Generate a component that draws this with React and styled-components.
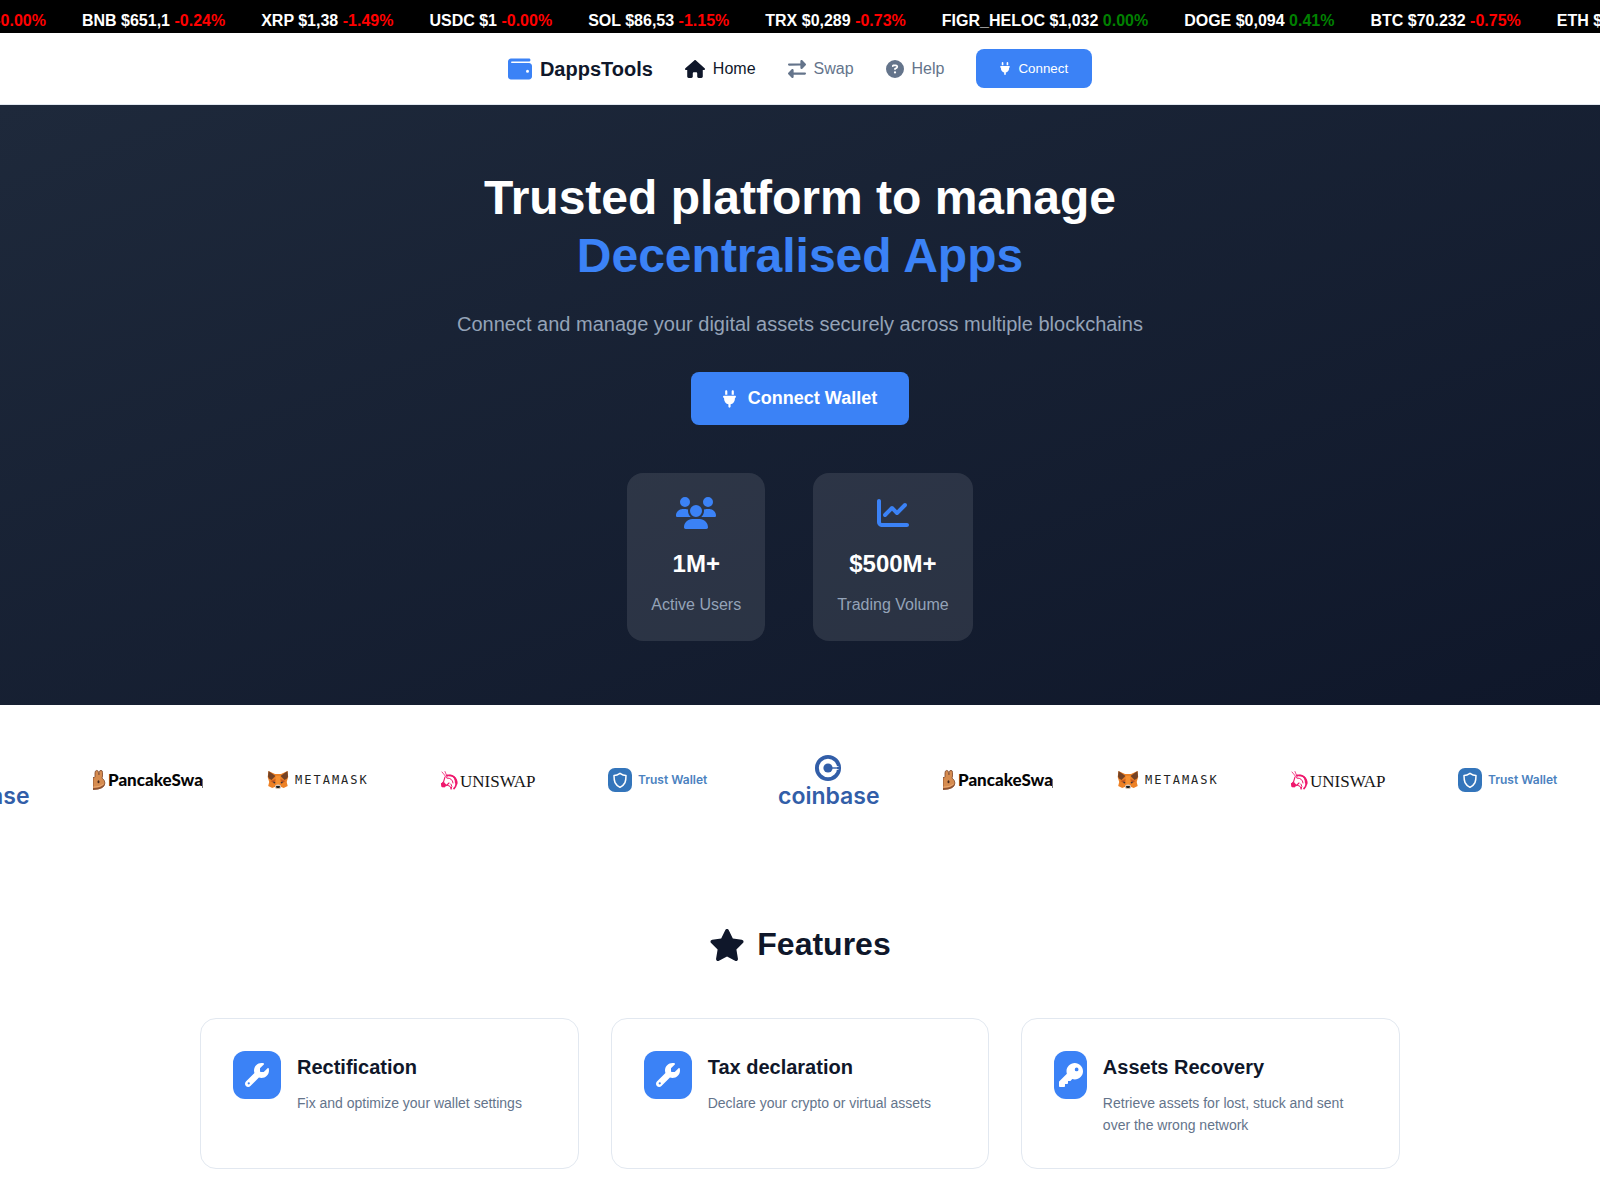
import React from "react";
import styled, { createGlobalStyle } from "styled-components";
import {
  FaWallet, FaHouse, FaRightLeft, FaCircleQuestion, FaPlug,
  FaUsers, FaChartLine, FaStar, FaWrench, FaKey,
} from "react-icons/fa6";

const GlobalStyle = createGlobalStyle`
  * { box-sizing: border-box; margin: 0; padding: 0; }
  body {
    font-family: "Liberation Sans", Arial, sans-serif;
    color: #0f172a;
    background: #ffffff;
    line-height: 1.6;
    overflow: hidden;
  }
`;

const Ticker = styled.div`
  height: 33px;
  padding-top: 5px;
  background: #000000;
  overflow: hidden;
`;

const TickerTrack = styled.ul`
  display: flex;
  gap: 36px;
  margin-left: -75px;
  list-style: none;
  font-size: 16px;
  line-height: 32px;
  font-weight: 700;
  color: #ffffff;
  white-space: nowrap;
`;

const Change = styled.span`
  color: ${(p) => (p.$up ? "#008000" : "#ff0000")};
`;

const Header = styled.header`
  display: flex;
  justify-content: center;
  padding: 16px 0;
  border-bottom: 1px solid #e2e8f0;
`;

const Nav = styled.nav`
  display: flex;
  align-items: center;
  gap: 32px;
`;

const Brand = styled.a`
  display: flex;
  align-items: center;
  gap: 8px;
  font-size: 20px;
  font-weight: 700;
  color: #0f172a;
  text-decoration: none;
  svg { width: 24px; height: 24px; color: #3b82f6; }
`;

const NavLink = styled.a`
  display: flex;
  align-items: center;
  gap: 8px;
  font-size: 16px;
  color: ${(p) => (p.$active ? "#0f172a" : "#64748b")};
  text-decoration: none;
  svg { flex: none; height: 18px; width: ${(p) => (p.$wideIcon ? 20 : 18)}px; }
`;

const Button = styled.button`
  display: inline-flex;
  align-items: center;
  justify-content: center;
  border: 0;
  border-radius: 8px;
  background: #3b82f6;
  color: #ffffff;
  font-family: inherit;
  cursor: pointer;
`;

const NavButton = styled(Button)`
  gap: 8px;
  padding: 12px 24px;
  line-height: 15px;
  svg { width: 10px; height: 13px; }
`;

const Hero = styled.section`
  display: flex;
  flex-direction: column;
  align-items: center;
  padding: 64px 32px;
  background: linear-gradient(160deg, #1e293b 0%, #0f172a 100%);
  text-align: center;
`;

const Title = styled.h1`
  font-size: 48px;
  line-height: 58px;
  font-weight: 700;
  color: #ffffff;
  span { display: block; color: #3b82f6; }
`;

const Lead = styled.p`
  margin-top: 23px;
  font-size: 20px;
  line-height: 32px;
  color: #94a3b8;
`;

const HeroButton = styled(Button)`
  gap: 12px;
  margin-top: 32px;
  padding: 16px 32px;
  font-size: 18px;
  line-height: 21px;
  font-weight: 700;
  svg { width: 13px; height: 18px; }
`;

const Stats = styled.div`
  display: flex;
  gap: 48px;
  margin-top: 48px;
`;

const Stat = styled.div`
  display: flex;
  flex-direction: column;
  align-items: center;
  padding: 24px;
  border-radius: 16px;
  background: rgba(255, 255, 255, 0.1);
  svg { width: 40px; height: 32px; color: #3b82f6; }
`;

const StatValue = styled.h3`
  margin-top: 16px;
  font-size: 24px;
  line-height: 38px;
  font-weight: 700;
  color: #ffffff;
`;

const StatLabel = styled.p`
  margin-top: 10px;
  font-size: 16px;
  line-height: 24px;
  color: #94a3b8;
`;

const Partners = styled.section`
  padding: 45px 0;
  overflow: hidden;
`;

const PartnerTrack = styled.div`
  display: flex;
  gap: 60px;
  margin-left: -77px;
  svg { flex: none; width: 110px; height: 60px; }
`;

const Features = styled.section`
  display: flex;
  flex-direction: column;
  align-items: center;
  padding: 64px 32px;
`;

const FeaturesTitle = styled.h2`
  display: flex;
  align-items: center;
  gap: 12px;
  font-size: 32px;
  line-height: 51px;
  font-weight: 700;
  svg { width: 36px; height: 32px; }
`;

const Grid = styled.div`
  display: grid;
  grid-template-columns: repeat(3, 1fr);
  gap: 32px;
  width: 100%;
  max-width: 1200px;
  margin-top: 48px;
`;

const Card = styled.article`
  display: flex;
  align-items: flex-start;
  gap: 16px;
  padding: 32px;
  border: 1px solid #e2e8f0;
  border-radius: 16px;
`;

const CardIcon = styled.div`
  display: flex;
  align-items: center;
  justify-content: center;
  width: 48px;
  height: 48px;
  border-radius: 12px;
  background: #3b82f6;
  color: #ffffff;
  svg { flex: none; width: 24px; height: 24px; }
`;

const CardTitle = styled.h3`
  font-size: 20px;
  line-height: 32px;
  font-weight: 700;
`;

const CardText = styled.p`
  margin-top: 9px;
  font-size: 14px;
  line-height: 22px;
  color: #64748b;
`;

const coins = [
  ["USDT $1", "-0.00%"],
  ["BNB $651,1", "-0.24%"],
  ["XRP $1,38", "-1.49%"],
  ["USDC $1", "-0.00%"],
  ["SOL $86,53", "-1.15%"],
  ["TRX $0,289", "-0.73%"],
  ["FIGR_HELOC $1,032", "0.00%"],
  ["DOGE $0,094", "0.41%"],
  ["BTC $70.232", "-0.75%"],
  ["ETH $", ""],
];

const features = [
  { icon: FaWrench, title: "Rectification", text: "Fix and optimize your wallet settings" },
  { icon: FaWrench, title: "Tax declaration", text: "Declare your crypto or virtual assets" },
  { icon: FaKey, title: "Assets Recovery", text: "Retrieve assets for lost, stuck and sent over the wrong network" },
];

const Coinbase = () => (
  <svg viewBox="0 0 110 60" role="img" aria-label="coinbase">
    <circle cx="55" cy="18" r="11.1" fill="none" stroke="#325ea8" strokeWidth="3.900" />
    <circle cx="55" cy="18" r="4.600" fill="#325ea8" />
    <path d="M55 17.300h10v1.400h-10z" fill="#325ea8" />
    <path d="M61.500 16.500h4M61.500 19.500h4" stroke="#fff" strokeWidth=".8" />
    <text x="5" y="54" fontFamily="Inter, sans-serif" fontSize="23" fontWeight="600" fill="#325ea8">coinbase</text>
  </svg>
);

const PancakeSwap = () => (
  <svg viewBox="0 0 110 60" role="img" aria-label="PancakeSwap">
    <path d="M0 27.500h1.200q.8-.3.8-1v-3.500q0-2.600 1.800-2.600t1.700 2.600q0 1.500.4 2 .5-.8.5-2.500 0-2.200 1.600-2.200t1.500 2.500v3.200q0 1.200-.6 2 3 2 3 5 0 6-11.900 6z" fill="#d68c50" stroke="#7d4527" strokeWidth=".8" />
    <path d="M0 38q8.500 0 11.800-4.200-.3 6-11.800 6.200z" fill="#8f5332" />
    <path d="M0 37.200q7 0 10.500-3" fill="none" stroke="#f0b07a" strokeWidth=".8" />
    <ellipse cx="5.500" cy="31.800" rx="1" ry="1.500" fill="#40251b" />
    <text x="15" y="36" fontFamily="Lato, sans-serif" fontSize="17" fontWeight="900" fill="#050505">PancakeSwa</text>
    <path d="M109.500 29v9" stroke="#777" />
  </svg>
);

const MetaMask = () => (
  <svg viewBox="0 0 110 60" role="img" aria-label="MetaMask">
    <path d="M5.500 21l6.500 3h6l6.500-3 .7 6-1.500 5 1 4-4 2-2.500-1-2 1.500h-2.500l-2-1.500-2.500 1-4-2 1-4-1.500-5z" fill="#ed8125" />
    <path d="M5.500 21l7 5-4 4-2.500-1.500-1-2zM24.500 21l-7 5 4 4 2.500-1.500 1-2z" fill="#754225" />
    <path d="M12.500 26h5l-.8 9h-3.400z" fill="#f69132" />
    <path d="M7.500 31l5-2-1 5zM22.500 31l-5-2 1 5z" fill="#c95b22" />
    <path d="M9.500 31.500l3 .8-1 1.200zM20.500 31.500l-3 .8 1 1.200z" fill="#2d363c" />
    <path d="M12 35.500l2-1h2l2 1v2.500l-1.500 1h-3l-1.500-1z" fill="#d6c1b1" />
    <path d="M13 36h4l-.5 2h-3z" fill="#181f22" />
    <text x="32" y="34" fontFamily="DejaVu Sans Mono, monospace" fontSize="12" letterSpacing="2" fill="#252525">METAMASK</text>
  </svg>
);

const Uniswap = () => (
  <svg viewBox="0 0 110 60" role="img" aria-label="Uniswap">
    <g fill="none" stroke="#ef176c" strokeLinecap="round">
      <path d="M9 22l5 6M12 21.500l2 5" strokeWidth=".8" />
      <path d="M14 25.500q8-.5 9 5t-2 8" strokeWidth="1.800" />
      <path d="M14 28q5.500 0 6 5M17 25q5.500 1 5.500 8M20 26q5 3 4 8" strokeWidth="1" />
      <path d="M12 27l-1.500 5-2 2 1 2.500 4-1 2.500-2.500" strokeWidth="1.100" />
      <path d="M14 35q4 .5 4.500 4M18 34q2 2.500 0 5" strokeWidth="1" />
    </g>
    <path d="M8 33.500l3-1.500 2.500 3-2 2.500-3-.5z" fill="#ef176c" />
    <text x="27" y="37" fontFamily="Liberation Serif, serif" fontSize="17" fill="#151515">UNISWAP</text>
  </svg>
);

const TrustWallet = () => (
  <svg viewBox="0 0 110 60" role="img" aria-label="Trust Wallet">
    <rect x="5" y="18" width="24" height="24" rx="7" fill="#3375bb" />
    <path d="M17 23.300q3 2.300 6 2.300c0 6-.7 8.700-6 11.700-5.300-3-6-5.700-6-11.700q3 0 6-2.300z" fill="none" stroke="#fff" strokeWidth="1.500" strokeLinejoin="round" />
    <text x="35" y="34" fontFamily="Inter, sans-serif" fontSize="12" fontWeight="600" fill="#4b82c0">Trust Wallet</text>
  </svg>
);

const partners = [Coinbase, PancakeSwap, MetaMask, Uniswap, TrustWallet];

export default function App() {
  return (
    <>
      <GlobalStyle />
      <Ticker>
        <TickerTrack>
          {coins.map(([price, change]) => (
            <li key={price}>
              {price} <Change $up={!change.startsWith("-")}>{change}</Change>
            </li>
          ))}
        </TickerTrack>
      </Ticker>
      <Header>
        <Nav>
          <Brand href="#"><FaWallet />DappsTools</Brand>
          <NavLink href="#home" $active $wideIcon><FaHouse />Home</NavLink>
          <NavLink href="#swap"><FaRightLeft />Swap</NavLink>
          <NavLink href="#help"><FaCircleQuestion />Help</NavLink>
          <NavButton type="button"><FaPlug />Connect</NavButton>
        </Nav>
      </Header>
      <main>
        <Hero id="home">
          <Title>Trusted platform to manage<span>Decentralised Apps</span></Title>
          <Lead>Connect and manage your digital assets securely across multiple blockchains</Lead>
          <HeroButton type="button"><FaPlug />Connect Wallet</HeroButton>
          <Stats>
            <Stat><FaUsers /><StatValue>1M+</StatValue><StatLabel>Active Users</StatLabel></Stat>
            <Stat><FaChartLine /><StatValue>$500M+</StatValue><StatLabel>Trading Volume</StatLabel></Stat>
          </Stats>
        </Hero>
        <Partners>
          <PartnerTrack>
            {[...partners, ...partners].map((Logo, i) => <Logo key={i} />)}
          </PartnerTrack>
        </Partners>
        <Features>
          <FeaturesTitle><FaStar />Features</FeaturesTitle>
          <Grid>
            {features.map(({ icon: Icon, title, text }) => (
              <Card key={title}>
                <CardIcon><Icon /></CardIcon>
                <div>
                  <CardTitle>{title}</CardTitle>
                  <CardText>{text}</CardText>
                </div>
              </Card>
            ))}
          </Grid>
        </Features>
      </main>
    </>
  );
}
